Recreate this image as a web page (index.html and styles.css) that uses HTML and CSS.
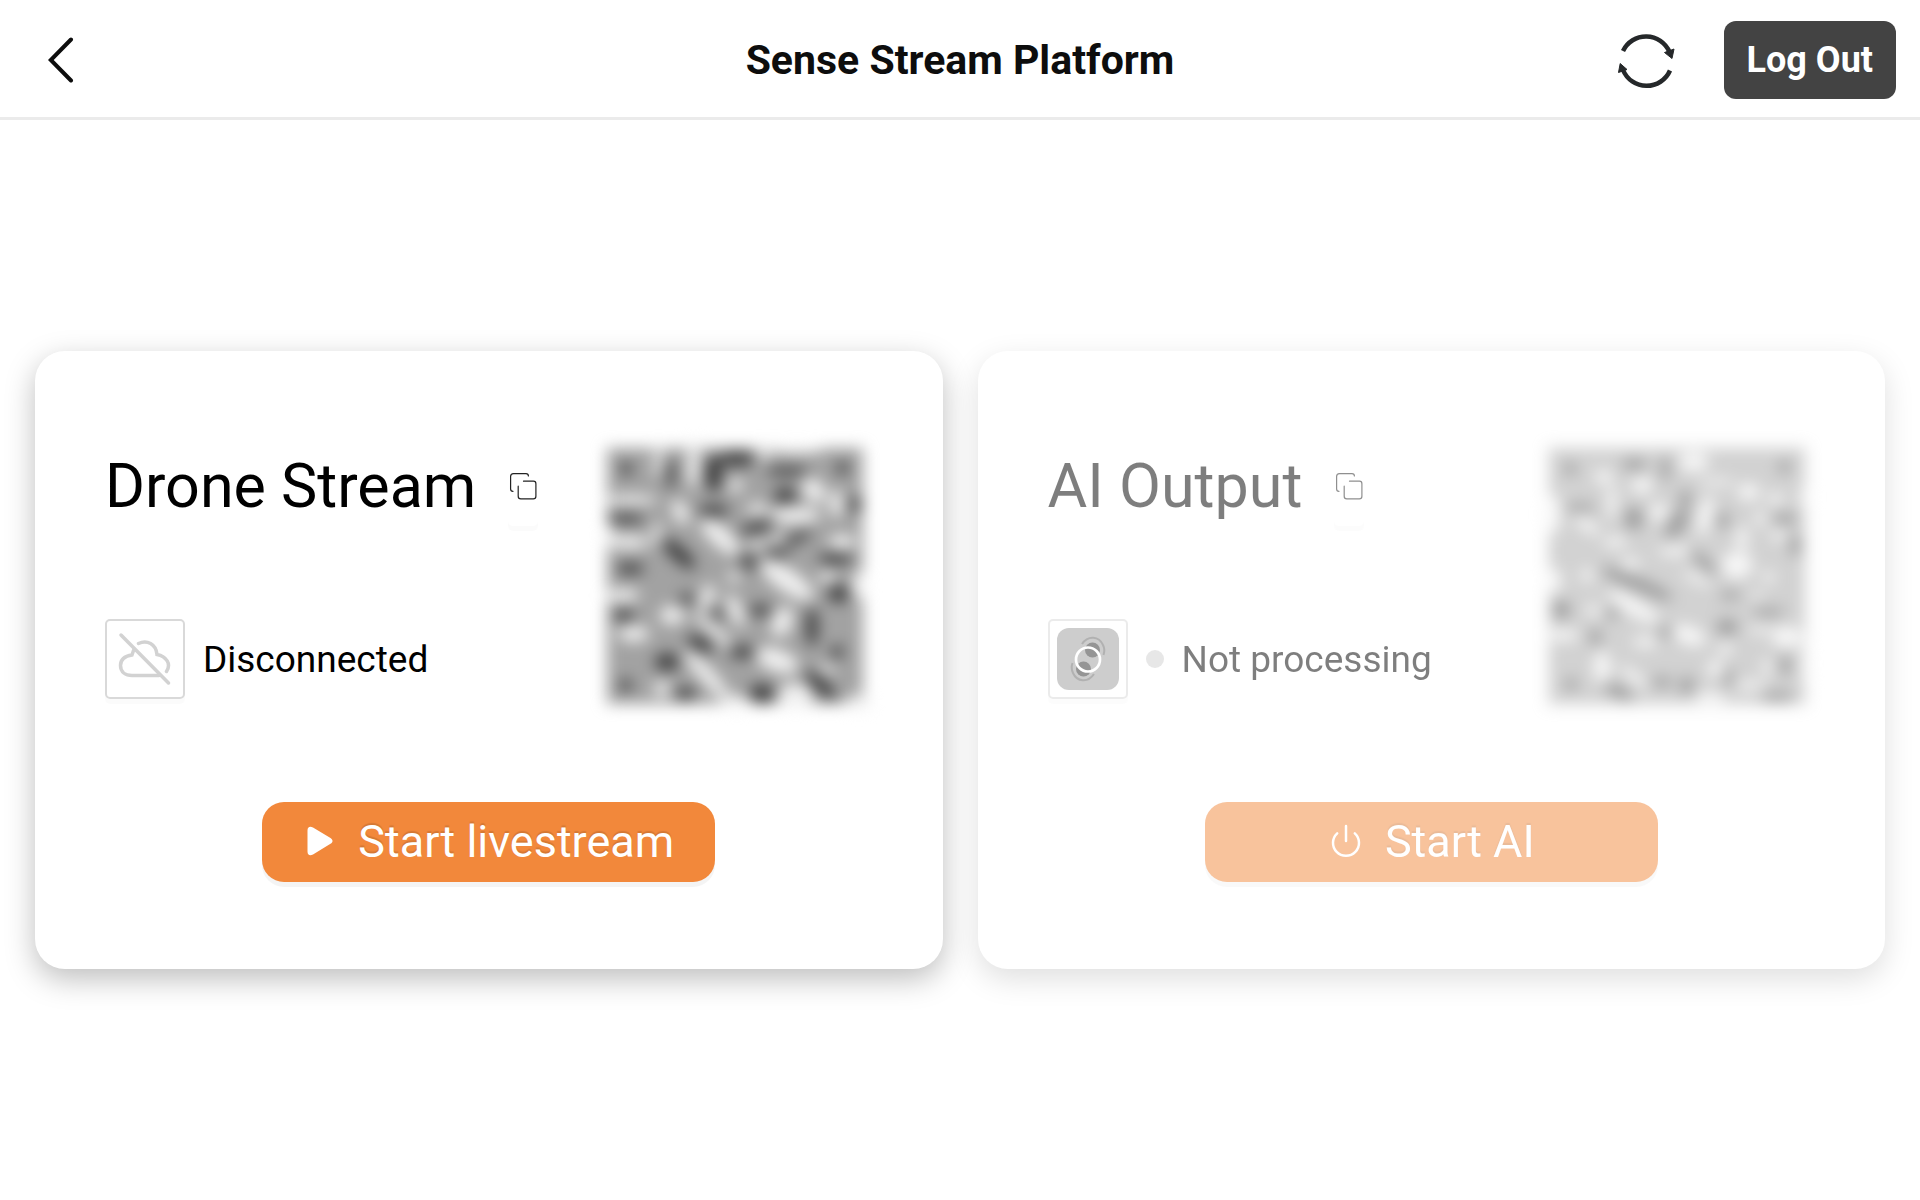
FILE: index.html
```html
<!DOCTYPE html>
<html lang="en">
<head>
<meta charset="utf-8">
<title>Sense Stream Platform</title>
<meta name="viewport" content="width=device-width, initial-scale=1">
<link rel="stylesheet" href="styles.css">
</head>
<body>
<header class="topbar">
  <div class="topbar-start">
    <button class="icon-button" type="button" aria-label="Back">
      <svg width="26" height="48" viewBox="0 0 26 48" fill="none" stroke="#0d0d0d" stroke-width="4" stroke-linecap="round"><path d="M23 3.500 2.800 24 23 44.500"/></svg>
    </button>
  </div>
  <h1 class="topbar-title">Sense Stream Platform</h1>
  <div class="topbar-end">
    <button class="icon-button" type="button" aria-label="Refresh">
      <svg width="58" height="58" viewBox="0 0 58 58" fill="none" stroke="#25282a" stroke-width="4.500">
        <path d="M6 20A25.500 25.500 0 0 1 52.500 21"/>
        <path d="M53 39.500A25.500 25.500 0 0 1 6 39"/>
        <path d="M47.500 21.500 57 18 55 27.500Z" fill="#25282a" stroke-width="1"/>
        <path d="M1.500 41.500 3.200 32.500 10 38.500Z" fill="#25282a" stroke-width="1"/>
      </svg>
    </button>
    <button class="logout" type="button">Log Out</button>
  </div>
</header>

<main class="streams">
  <section class="card">
    <div class="card-top">
      <div class="card-info">
        <div class="card-heading">
          <h2>Drone Stream</h2>
          <button class="copy" type="button" aria-label="Copy drone stream address">
            <svg width="28" height="28" viewBox="0 0 28 28" fill="none" stroke="#222" stroke-width="1.200" stroke-linecap="round"><path d="M4 19.300C2.300 19.300 1.600 18.500 1.600 17V4.500C1.600 2.600 2.600 1.600 4.500 1.600H17C18.600 1.600 19.400 2.400 19.400 4"/><path d="M14.500 9.200H24.500C26 9.200 26.900 10 26.900 11.700V24.200C26.900 25.900 26 26.900 24.300 26.900H11.800C10.100 26.900 9.200 26 9.200 24.300V14.200"/></svg>
          </button>
        </div>
        <div class="status">
          <span class="status-icon">
            <svg width="54" height="54" viewBox="0 0 54 54" fill="none" stroke="#d2d2d2" stroke-width="3.500" stroke-linecap="round"><path d="M3 3 50.500 51"/><path d="M15.500 18.500 14 23C7 24 2.500 27.500 2.500 33.500 2.500 40 7.500 43.500 14 43.500H41"/><path d="M20.500 11.500C29 7.500 38 12 39 22.500 48.500 24.500 53.500 32 48.500 39.500"/></svg>
          </span>
          <span>Disconnected</span>
        </div>
      </div>
      <svg class="qr" viewBox="50 53 768 768" role="img" aria-label="Drone stream QR code">
        <g class="qr-blur">
          <rect x="50" y="53" width="768" height="768" fill="#a2a2a2"/>
          <g class="qr-light">
            <ellipse cx="310" cy="100" rx="17" ry="70"/><ellipse cx="205" cy="95" rx="10" ry="45"/>
            <ellipse cx="120" cy="208" rx="80" ry="12"/><ellipse cx="270" cy="245" rx="20" ry="38" transform="rotate(-25 270 245)"/>
            <ellipse cx="390" cy="320" rx="72" ry="27" transform="rotate(42 390 320)"/><ellipse cx="590" cy="450" rx="92" ry="32" transform="rotate(35 590 450)"/>
            <ellipse cx="615" cy="255" rx="75" ry="22"/><ellipse cx="670" cy="180" rx="28" ry="40" transform="rotate(-40 670 180)"/>
            <ellipse cx="738" cy="220" rx="18" ry="40"/><ellipse cx="500" cy="235" rx="28" ry="15"/>
            <ellipse cx="435" cy="165" rx="22" ry="16"/><ellipse cx="110" cy="335" rx="65" ry="18"/>
            <ellipse cx="755" cy="335" rx="38" ry="20"/><ellipse cx="95" cy="495" rx="50" ry="18"/>
            <ellipse cx="350" cy="500" rx="18" ry="38" transform="rotate(15 350 500)"/><ellipse cx="245" cy="555" rx="35" ry="26"/>
            <ellipse cx="435" cy="540" rx="18" ry="50" transform="rotate(-25 435 540)"/><ellipse cx="370" cy="600" rx="75" ry="12" transform="rotate(45 370 600)"/>
            <ellipse cx="575" cy="575" rx="28" ry="45" transform="rotate(20 575 575)"/><ellipse cx="130" cy="610" rx="45" ry="22"/>
            <ellipse cx="560" cy="690" rx="65" ry="32" transform="rotate(20 560 690)"/><ellipse cx="350" cy="735" rx="95" ry="20" transform="rotate(48 350 735)"/>
            <ellipse cx="615" cy="795" rx="52" ry="35"/><ellipse cx="440" cy="815" rx="45" ry="18"/>
            <ellipse cx="805" cy="465" rx="18" ry="40"/><ellipse cx="710" cy="440" rx="22" ry="16"/>
            <ellipse cx="520" cy="70" rx="14" ry="20"/><ellipse cx="620" cy="60" rx="75" ry="8"/>
            <ellipse cx="805" cy="815" rx="36" ry="20"/><ellipse cx="215" cy="775" rx="24" ry="20"/>
            <ellipse cx="430" cy="440" rx="16" ry="16"/><ellipse cx="560" cy="320" rx="22" ry="10"/>
            <ellipse cx="710" cy="715" rx="22" ry="10"/><ellipse cx="55" cy="315" rx="12" ry="34"/>
            <ellipse cx="200" cy="310" rx="10" ry="34"/><ellipse cx="500" cy="340" rx="24" ry="10"/>
          </g>
          <g class="qr-dark">
            <circle cx="108" cy="115" r="12"/><circle cx="756" cy="113" r="12"/><circle cx="106" cy="765" r="12"/>
            <ellipse cx="370" cy="130" rx="20" ry="48"/><ellipse cx="440" cy="85" rx="46" ry="16"/>
            <ellipse cx="370" cy="240" rx="38" ry="10"/><ellipse cx="585" cy="195" rx="28" ry="16"/>
            <ellipse cx="590" cy="122" rx="55" ry="6"/><ellipse cx="795" cy="222" rx="12" ry="16"/>
            <ellipse cx="500" cy="292" rx="44" ry="9" transform="rotate(-12 500 292)"/><ellipse cx="265" cy="370" rx="56" ry="15" transform="rotate(42 265 370)"/>
            <ellipse cx="105" cy="265" rx="48" ry="6"/><ellipse cx="120" cy="415" rx="34" ry="9"/>
            <ellipse cx="475" cy="395" rx="22" ry="12" transform="rotate(35 475 395)"/><ellipse cx="735" cy="385" rx="44" ry="9"/>
            <ellipse cx="745" cy="490" rx="26" ry="20"/><ellipse cx="510" cy="540" rx="26" ry="10"/>
            <ellipse cx="330" cy="640" rx="36" ry="14" transform="rotate(25 330 640)"/><ellipse cx="230" cy="695" rx="30" ry="20"/>
            <ellipse cx="455" cy="665" rx="32" ry="12"/><ellipse cx="515" cy="790" rx="32" ry="22"/>
            <ellipse cx="690" cy="765" rx="52" ry="14" transform="rotate(42 690 765)"/><ellipse cx="665" cy="590" rx="11" ry="50"/>
            <ellipse cx="285" cy="790" rx="26" ry="11"/><ellipse cx="100" cy="555" rx="26" ry="9"/>
            <ellipse cx="740" cy="665" rx="12" ry="14"/><ellipse cx="290" cy="505" rx="16" ry="8"/>
            <ellipse cx="620" cy="325" rx="40" ry="5" transform="rotate(-25 620 325)"/>
            <ellipse cx="380" cy="550" rx="11" ry="11"/><ellipse cx="560" cy="370" rx="28" ry="5"/><ellipse cx="240" cy="130" rx="6" ry="38"/>
          </g>
        </g>
      </svg>
    </div>
    <button class="action" type="button">
      <svg width="28" height="30" viewBox="0 0 28 30" fill="#fff"><path d="M1.500 4.500C1.500.800 4-.100 7 1.600L24.500 11.900C27.200 13.600 27.200 16.200 24.500 17.800L7 28.400C4 30.100 1.500 29.200 1.500 25.500Z"/></svg>
      <span>Start livestream</span>
    </button>
  </section>

  <section class="card card-inactive">
    <div class="card-top">
      <div class="card-info">
        <div class="card-heading">
          <h2>AI Output</h2>
          <button class="copy" type="button" aria-label="Copy AI output address">
            <svg width="28" height="28" viewBox="0 0 28 28" fill="none" stroke="#222" stroke-width="1.200" stroke-linecap="round"><path d="M4 19.300C2.300 19.300 1.600 18.500 1.600 17V4.500C1.600 2.600 2.600 1.600 4.500 1.600H17C18.600 1.600 19.400 2.400 19.400 4"/><path d="M14.500 9.200H24.500C26 9.200 26.900 10 26.900 11.700V24.200C26.900 25.900 26 26.900 24.300 26.900H11.800C10.100 26.900 9.200 26 9.200 24.300V14.200"/></svg>
          </button>
        </div>
        <div class="status">
          <span class="status-icon">
            <svg width="62" height="62" viewBox="0 0 62 62" fill="none"><rect width="62" height="62" rx="12" fill="#9c9c9c"/><circle cx="35.500" cy="22" r="7.500" fill="#2d2d2d"/><circle cx="26.500" cy="41" r="7.500" fill="#2d2d2d"/><path d="M25 16C31 7 42 8 46 17 47.500 20 47.500 24 46.500 27" stroke="#666" stroke-width="2"/><path d="M37 46C31 55 20 54 16 45 14.500 42 14.500 38 15.500 35" stroke="#666" stroke-width="2"/><circle cx="31" cy="31.500" r="12" stroke="#fff" stroke-width="2.700"/></svg>
          </span>
          <span class="status-dot"></span>
          <span>Not processing</span>
        </div>
      </div>
      <svg class="qr" viewBox="56 53 768 768" role="img" aria-label="AI output QR code">
        <g class="qr-blur">
          <rect x="56" y="53" width="768" height="768" fill="#a6a6a6"/>
          <g class="qr-light">
            <ellipse cx="220" cy="140" rx="28" ry="18"/><ellipse cx="335" cy="165" rx="30" ry="24"/>
            <ellipse cx="245" cy="215" rx="12" ry="50"/><ellipse cx="385" cy="245" rx="24" ry="26"/>
            <ellipse cx="490" cy="95" rx="44" ry="28"/><ellipse cx="525" cy="255" rx="20" ry="58" transform="rotate(12 525 255)"/>
            <ellipse cx="655" cy="185" rx="32" ry="24"/><ellipse cx="560" cy="155" rx="50" ry="8"/>
            <ellipse cx="735" cy="205" rx="24" ry="14"/><ellipse cx="690" cy="265" rx="14" ry="20"/>
            <ellipse cx="70" cy="250" rx="20" ry="58"/><ellipse cx="170" cy="285" rx="42" ry="14" transform="rotate(35 170 285)"/>
            <ellipse cx="255" cy="335" rx="34" ry="14"/><ellipse cx="435" cy="362" rx="50" ry="12"/>
            <ellipse cx="620" cy="405" rx="46" ry="38"/><ellipse cx="635" cy="325" rx="16" ry="36"/>
            <ellipse cx="745" cy="315" rx="24" ry="12"/><ellipse cx="300" cy="400" rx="26" ry="16"/>
            <ellipse cx="170" cy="435" rx="18" ry="18"/><ellipse cx="72" cy="450" rx="20" ry="34"/>
            <ellipse cx="310" cy="530" rx="86" ry="22" transform="rotate(30 310 530)"/><ellipse cx="500" cy="445" rx="44" ry="9" transform="rotate(25 500 445)"/>
            <ellipse cx="475" cy="615" rx="52" ry="26" transform="rotate(20 475 615)"/><ellipse cx="585" cy="655" rx="16" ry="20"/>
            <ellipse cx="345" cy="635" rx="36" ry="14"/><ellipse cx="770" cy="620" rx="44" ry="32"/>
            <ellipse cx="690" cy="600" rx="34" ry="8"/><ellipse cx="100" cy="615" rx="44" ry="16"/>
            <ellipse cx="215" cy="710" rx="24" ry="46"/><ellipse cx="310" cy="740" rx="48" ry="12" transform="rotate(40 310 740)"/>
            <ellipse cx="555" cy="715" rx="20" ry="26"/><ellipse cx="540" cy="800" rx="46" ry="14"/>
            <ellipse cx="660" cy="765" rx="50" ry="10"/><ellipse cx="822" cy="200" rx="12" ry="32"/>
            <ellipse cx="710" cy="710" rx="14" ry="20"/><ellipse cx="715" cy="440" rx="16" ry="16"/>
            <ellipse cx="190" cy="540" rx="22" ry="14"/><ellipse cx="824" cy="700" rx="8" ry="70"/><ellipse cx="680" cy="495" rx="16" ry="8"/>
          </g>
          <g class="qr-dark">
            <circle cx="120" cy="115" r="12"/><circle cx="762" cy="110" r="12"/><circle cx="122" cy="762" r="12"/>
            <ellipse cx="312" cy="102" rx="30" ry="9"/><ellipse cx="310" cy="265" rx="22" ry="28"/>
            <ellipse cx="440" cy="280" rx="18" ry="44" transform="rotate(35 440 280)"/><ellipse cx="465" cy="205" rx="12" ry="20"/>
            <ellipse cx="578" cy="270" rx="12" ry="18"/><ellipse cx="765" cy="265" rx="30" ry="8"/>
            <ellipse cx="320" cy="460" rx="110" ry="13" transform="rotate(23 320 460)"/><ellipse cx="520" cy="395" rx="44" ry="8" transform="rotate(42 520 395)"/>
            <ellipse cx="92" cy="538" rx="22" ry="20"/><ellipse cx="590" cy="590" rx="26" ry="18"/>
            <ellipse cx="405" cy="605" rx="14" ry="12"/><ellipse cx="195" cy="620" rx="12" ry="18"/>
            <ellipse cx="265" cy="785" rx="40" ry="11" transform="rotate(25 265 785)"/><ellipse cx="395" cy="755" rx="24" ry="8"/>
            <ellipse cx="470" cy="765" rx="15" ry="20"/><ellipse cx="740" cy="800" rx="42" ry="7"/>
            <ellipse cx="765" cy="705" rx="9" ry="24"/><ellipse cx="795" cy="345" rx="9" ry="28"/><ellipse cx="405" cy="115" rx="7" ry="30"/>
            <ellipse cx="150" cy="232" rx="36" ry="5"/><ellipse cx="715" cy="545" rx="40" ry="5"/><ellipse cx="245" cy="550" rx="13" ry="10"/>
            <ellipse cx="600" cy="495" rx="24" ry="6"/><ellipse cx="595" cy="745" rx="8" ry="20"/>
          </g>
        </g>
      </svg>
    </div>
    <button class="action" type="button">
      <svg width="30" height="34" viewBox="0 0 30 34" fill="none" stroke="#fff" stroke-width="2.500" stroke-linecap="round"><path d="M15 2V17"/><path d="M6.200 9.300A13 13 0 1 0 23.800 9.300"/></svg>
      <span>Start AI</span>
    </button>
  </section>
</main>
</body>
</html>
```
FILE: styles.css
```css
* {
  box-sizing: border-box;
}

body {
  margin: 0;
  min-height: 100vh;
  display: flex;
  flex-direction: column;
  background: #fff;
  color: #000;
  font-family: Roboto, "Liberation Sans", sans-serif;
}

button {
  margin: 0;
  padding: 0;
  border: 0;
  background: none;
  color: inherit;
  font: inherit;
  cursor: pointer;
}

svg {
  display: block;
  flex: none;
}

h1,
h2 {
  margin: 0;
}

.topbar {
  display: grid;
  grid-template-columns: 1fr auto 1fr;
  align-items: center;
  min-height: 120px;
  padding: 3px 24px 0;
  border-bottom: 3px solid #ebebeb;
}

.topbar-start,
.topbar-end {
  display: flex;
  align-items: center;
}

.topbar-start {
  padding-left: 24px;
}

.topbar-end {
  justify-content: flex-end;
  gap: 49px;
}

.topbar-title {
  color: #0d0d0d;
  font-size: 41px;
  font-weight: 700;
  line-height: 48px;
}

.logout {
  height: 78px;
  padding: 0 23px;
  border-radius: 12px;
  background: #434343;
  color: #fff;
  font-size: 36px;
  font-weight: 700;
}

.streams {
  flex: 1;
  display: grid;
  grid-template-columns: 1fr 1fr;
  align-items: center;
  gap: 35px;
  padding: 35px;
}

.card {
  display: flex;
  flex-direction: column;
  align-items: center;
  gap: 96px;
  padding: 95px 70px 87px;
  border-radius: 30px;
  background: #fff;
  box-shadow: 0 10px 30px rgba(0, 0, 0, 0.26);
}

.card-inactive {
  opacity: 0.5;
}

.card-top {
  width: 100%;
  display: flex;
  justify-content: space-between;
}

.card-info {
  display: flex;
  flex-direction: column;
  gap: 93px;
}

.card-heading {
  display: flex;
  gap: 32px;
}

.card-heading h2 {
  font-size: 61px;
  font-weight: 400;
  line-height: 80px;
}

.copy {
  display: flex;
  align-items: center;
  justify-content: center;
  width: 30px;
  height: 80px;
  border-radius: 5px;
  box-shadow: 0 5px 0 rgba(0, 0, 0, 0.016);
}

.status {
  display: flex;
  align-items: center;
  gap: 18px;
  font-size: 37px;
}

.status-icon {
  display: flex;
  align-items: center;
  justify-content: center;
  width: 80px;
  height: 80px;
  border: 2px solid #d9d9d9;
  border-radius: 5px;
  box-shadow: 0 5px 0 rgba(0, 0, 0, 0.016);
}

.status-dot {
  width: 18px;
  height: 18px;
  border-radius: 50%;
  background: #d1d1d1;
}

.qr {
  width: 256px;
  height: 256px;
  margin: 2px 10px;
  overflow: visible;
}

.qr-blur {
  filter: blur(23px);
}

.qr-light {
  fill: #f0f0f0;
  stroke: #f0f0f0;
  stroke-width: 4px;
}

.qr-dark {
  fill: #404040;
  stroke: #404040;
  stroke-width: 14px;
}

.action {
  display: flex;
  align-items: center;
  justify-content: center;
  gap: 24px;
  width: 59%;
  height: 80px;
  padding: 0 0 2px 3px;
  border-radius: 22px;
  background: #f2883b;
  box-shadow: 0 5px 0 rgba(0, 0, 0, 0.045);
  color: #fff;
  font-size: 45px;
  text-shadow: 0 -2px 1px rgba(0, 0, 0, 0.12);
}
```
